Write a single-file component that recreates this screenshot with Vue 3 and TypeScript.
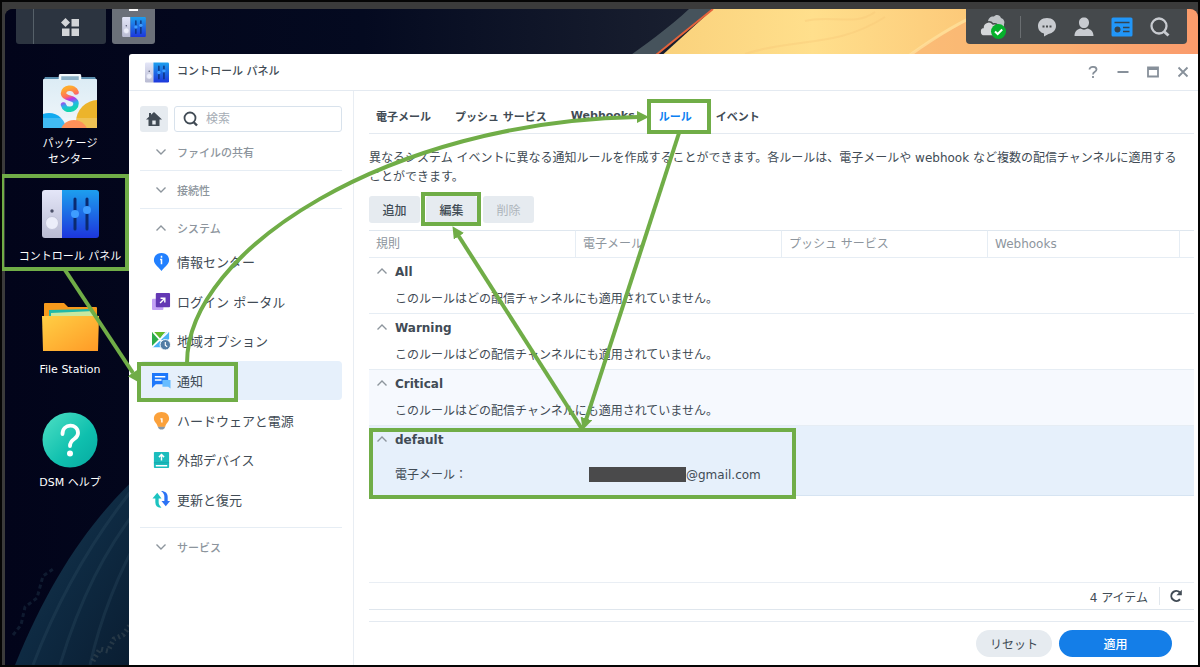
<script setup lang="ts">
import { ref } from 'vue'

interface NavItem { id: string; label: string }
interface Rule { name: string; email?: string; state?: 'hover' | 'selected' }

const tabs: string[] = ['電子メール', 'プッシュ サービス', 'Webhooks', 'ルール', 'イベント']
const activeTab = ref<string>('ルール')

const items: NavItem[] = [
  { id: 'info', label: '情報センター' },
  { id: 'portal', label: 'ログイン ポータル' },
  { id: 'region', label: '地域オプション' },
  { id: 'notify', label: '通知' },
  { id: 'power', label: 'ハードウェアと電源' },
  { id: 'device', label: '外部デバイス' },
  { id: 'update', label: '更新と復元' },
]
const activeItem = ref<string>('notify')
const keyword = ref<string>('')

const columns: string[] = ['規則', '電子メール', 'プッシュ サービス', 'Webhooks', '']
const rules: Rule[] = [
  { name: 'All' },
  { name: 'Warning' },
  { name: 'Critical', state: 'hover' },
  { name: 'default', email: '@gmail.com', state: 'selected' },
]
</script>

<template>
  <div class="shell">
    <div class="desktop">
      <svg class="wallpaper" viewBox="0 0 1193 656" preserveAspectRatio="xMinYMin slice" aria-hidden="true">
        <defs>
          <linearGradient id="sand" x1="0" x2="1" y1="0" y2="0">
            <stop offset="0" stop-color="#f9d07a" />
            <stop offset=".3" stop-color="#ffdf8c" />
            <stop offset=".6" stop-color="#fcc878" />
            <stop offset="1" stop-color="#fb946c" />
          </linearGradient>
          <linearGradient id="night" x1="0" x2="1" y1="0" y2="0">
            <stop offset="0" stop-color="#02041a" />
            <stop offset=".3" stop-color="#040a20" />
            <stop offset=".58" stop-color="#1a2030" />
          </linearGradient>
          <linearGradient id="ridge" x1="0" x2="1" y1="0" y2="1">
            <stop offset="0" stop-color="#1d3a50" />
            <stop offset=".5" stop-color="#0e2a42" />
            <stop offset="1" stop-color="#0a1c30" />
          </linearGradient>
        </defs>
        <rect width="1193" height="656" fill="url(#night)" />
        <path d="M708 0 640 56H612C640 36 665 18 684 0Z" fill="#46535c" />
        <path d="M708 0H1193V60H642Z" fill="url(#sand)" />
        <path d="M708 0 646 50" stroke="#e5623a" stroke-width="2" />
        <path d="M905 45C935 25 960 14 985 0H1193V60H890Z" fill="#f9a56c" opacity=".45" />
        <path d="M905 46C930 28 955 12 985 0" stroke="#ffe2a0" stroke-width="3" fill="none" opacity=".7" />
        <path d="M740 45C790 28 830 40 880 8M800 12C825 5 850 18 870 3" stroke="#f5c676" stroke-width="2" fill="none" opacity=".35" />
        <path d="M140 460C85 510 45 570 10 656H140Z" fill="url(#ridge)" />
        <path d="M136 470C90 525 55 585 28 656M136 495C100 540 75 590 55 656M136 525C115 560 95 610 85 656" stroke="#38576a" stroke-width="3" fill="none" opacity=".25" />
        <path d="M88 652l7-12 8 2 6-12 9-4 8-11" stroke="#566064" stroke-width="5" stroke-dasharray="2 3" fill="none" opacity=".35" />
        <path d="M8 626l8-10 4-18 12-9 6-22 10-7" stroke="#28445a" stroke-width="3" stroke-dasharray="4 3" fill="none" opacity=".35" />
      </svg>

      <svg class="defs" aria-hidden="true">
        <defs>
          <linearGradient id="cpBlue" x1="0" x2="0" y1="0" y2="1">
            <stop offset="0" stop-color="#1d9fee" /><stop offset="1" stop-color="#1d36dc" />
          </linearGradient>
          <linearGradient id="cpGrey" x1="0" x2="0" y1="0" y2="1">
            <stop offset="0" stop-color="#e4e6f8" /><stop offset="1" stop-color="#b9bbd2" />
          </linearGradient>
          <symbol id="panelIcon" viewBox="0 0 57 48">
            <path d="M3 0H20V48H3Q0 48 0 45V3Q0 0 3 0Z" fill="url(#cpGrey)" />
            <path d="M20 0H54Q57 0 57 3V45Q57 48 54 48H20Z" fill="url(#cpBlue)" />
            <circle cx="10" cy="21" r="1.7" fill="#4b5068" />
            <circle cx="10" cy="33" r="6.5" fill="#eceefa" stroke="#c3c5da" />
            <path d="M33 9V39M45 9V39" stroke="#0a2a70" stroke-width="3" stroke-linecap="round" />
            <circle cx="33" cy="24" r="4" fill="#3f9dff" /><circle cx="45" cy="20" r="4" fill="#3f9dff" />
          </symbol>
        </defs>
      </svg>

      <header class="taskbar">
        <div class="launcher">
          <button class="main-menu" type="button" aria-label="メイン メニュー">
            <svg width="18" height="18" viewBox="0 0 18 18" fill="#d3d5d8">
              <path d="M4.500 0 9 4.500 4.500 9 0 4.500Z" /><path d="M10.500 1H18V8.500H10.500ZM1 10.500H8.500V18H1ZM10.500 10.500H18V18H10.500Z" />
            </svg>
          </button>
        </div>
        <button class="task" type="button" aria-label="コントロール パネル">
          <svg width="24" height="20"><use href="#panelIcon" /></svg>
        </button>
        <div class="tray">
          <button type="button" class="tray-cloud" aria-label="同期">
            <svg width="28" height="26" viewBox="0 0 28 26">
              <path d="M9 8C9 4 12 2 15 2.500 16 .5 21 0 22 4 25 5 26 8 25 10V18H12Z" fill="#bfc3c7" />
              <path d="M5 22C0 22 0 14 4 13.500 4 8 11 6 14 10 18 9 20 12 20 15V22Z" fill="#d5d7da" stroke="#474a4c" stroke-width="1.500" />
              <circle cx="19.500" cy="17.500" r="7.500" fill="#06b02c" />
              <path d="M16 17.500 18.700 20 23.200 15.500" stroke="#fff" stroke-width="2" fill="none" />
            </svg>
          </button>
          <button type="button" class="tray-chat" aria-label="チャット">
            <svg width="20" height="20" viewBox="0 0 20 20">
              <path d="M10 1C15.500 1 19 4.500 19 9 19 13 16 16 11.500 17L7 19.500V16.500C3 15.500 1 12.500 1 9 1 4.500 4.500 1 10 1Z" fill="#c8cbd0" />
              <path d="M5.500 9.500h2M9 9.500h2M12.500 9.500h2" stroke="#474a4c" stroke-width="2" />
            </svg>
          </button>
          <button type="button" aria-label="ユーザー">
            <svg width="20" height="20" viewBox="0 0 20 20" fill="#c8cbd0"><path d="M10 0.500C13 .5 15 2.500 15 5.500 15 9 13 11 10 11S5 9 5 5.500C5 2.500 7 .5 10 .5ZM.5 19C.5 14 4 12 6.500 11.500 8.500 13 11.500 13 13.500 11.500 16 12 19.500 14 19.500 19Z" /></svg>
          </button>
          <button type="button" aria-label="ウィジェット">
            <svg width="22" height="20" viewBox="0 0 22 20">
              <rect x=".5" y=".5" width="21" height="19" rx="1.500" fill="#2196f8" />
              <path d="M3.500 5.500H18.500M12 10.500H18.500M12 14.500H18.500" stroke="#35444f" stroke-width="1.700" /><circle cx="6.500" cy="12.500" r="3" fill="#35444f" />
            </svg>
          </button>
          <button type="button" aria-label="検索">
            <svg width="20" height="20" viewBox="0 0 20 20" fill="none" stroke="#c8cbd0"><circle cx="9" cy="9" r="7.500" stroke-width="2.300" /><path d="M14 14.500 18.500 18.500" stroke-width="3" /></svg>
          </button>
        </div>
      </header>

      <div class="workspace">
        <nav class="icons" aria-label="デスクトップ">
          <button class="icon" type="button">
            <span class="picture">
              <svg width="54" height="54" viewBox="0 0 54 54">
                <defs>
                  <linearGradient id="bag" x1="0" x2="0" y1="0" y2="1"><stop offset="0" stop-color="#dcecf5" /><stop offset="1" stop-color="#f0f6fa" /></linearGradient>
                  <linearGradient id="esse" x1=".3" x2=".5" y1="0" y2="1"><stop offset="0" stop-color="#ffab2e" /><stop offset=".38" stop-color="#ff6d5e" /><stop offset=".55" stop-color="#b935ee" /><stop offset=".78" stop-color="#24b6e8" /><stop offset="1" stop-color="#14d4b0" /></linearGradient>
                  <clipPath id="bagClip"><rect y="5" width="54" height="49" rx="1" /></clipPath>
                </defs>
                <path d="M2 3H52L54 7H0Z" fill="#5c8fae" />
                <rect y="5" width="54" height="49" rx="1" fill="url(#bag)" />
                <path d="M17 6V2Q17 1 18 1H36Q37 1 37 2V6" fill="#8bb0c6" stroke="#f3f8fb" stroke-width="2.500" />
                <g clip-path="url(#bagClip)">
                  <circle cx="55" cy="48" r="22" fill="#ecb42b" /><circle cx="6" cy="56" r="17" fill="#12aaf0" /><circle cx="31" cy="60" r="14" fill="#ff7630" />
                  <rect y="44" width="54" height="10" fill="#fff" opacity=".2" />
                </g>
                <path d="M33 18C31 12 20.500 13.500 20.500 19.500 21 25.500 33 23 33 29.500 33 36.500 22 37.500 20.500 31" fill="none" stroke="url(#esse)" stroke-width="5.500" stroke-linecap="round" />
              </svg>
            </span>
            <span>パッケージ<br />センター</span>
          </button>
          <button class="icon" type="button">
            <span class="picture"><svg width="57" height="48"><use href="#panelIcon" /></svg></span>
            <span>コントロール パネル</span>
          </button>
          <button class="icon" type="button">
            <span class="picture">
              <svg width="57" height="50" viewBox="0 0 57 50">
                <defs><linearGradient id="folder" x1="0" x2="1" y1="0" y2="1"><stop offset="0" stop-color="#ffcf45" /><stop offset="1" stop-color="#ff9a26" /></linearGradient></defs>
                <path d="M3 1H22L26 5H54Q55 5 55 6V20H2V2Q2 1 3 1Z" fill="#f79a1c" />
                <path d="M7 8 48 7V16H7Z" fill="#1fb9a8" /><path d="M9 11 52 9V18H9Z" fill="#c8e8a0" />
                <path d="M0 14H57L56 49H1Z" fill="url(#folder)" />
              </svg>
            </span>
            <span>File Station</span>
          </button>
          <button class="icon" type="button">
            <span class="picture">
              <svg width="56" height="56" viewBox="0 0 56 56">
                <defs><linearGradient id="mint" x1="0" x2="1" y1="0" y2="1"><stop offset="0" stop-color="#4fe0c4" /><stop offset=".6" stop-color="#0fbfae" /><stop offset="1" stop-color="#06aaa0" /></linearGradient></defs>
                <circle cx="28" cy="28" r="27.500" fill="url(#mint)" />
                <path d="M20.500 22C20.500 11 36 11 36 21 36 28 28 26 28 34" fill="none" stroke="#fff" stroke-width="3.800" stroke-linecap="round" /><circle cx="28" cy="41.500" r="3" fill="#fff" />
              </svg>
            </span>
            <span>DSM ヘルプ</span>
          </button>
        </nav>

        <section class="window" aria-label="コントロール パネル">
          <header class="titlebar">
            <svg width="24" height="21"><use href="#panelIcon" /></svg>
            <h1>コントロール パネル</h1>
            <div class="controls">
              <button type="button" aria-label="ヘルプ"><svg viewBox="0 0 12 12"><path d="M2.500 3.500C2.500 0 9.500 0 9.500 3.500 9.500 6 6 5.500 6 8.500M6 10V12" /></svg></button>
              <button type="button" aria-label="最小化"><svg viewBox="0 0 12 12"><path d="M0.500 6H11.500" /></svg></button>
              <button type="button" aria-label="最大化"><svg viewBox="0 0 12 12"><path d="M1 1.500H11V10.500H1ZM1 3H11" /></svg></button>
              <button type="button" aria-label="閉じる"><svg viewBox="0 0 12 12"><path d="M1.500 1.500 10.500 10.500M10.500 1.500 1.500 10.500" /></svg></button>
            </div>
          </header>

          <div class="body">
            <aside class="sidebar">
              <div class="finder">
                <button class="home" type="button" aria-label="ホーム">
                  <svg width="16" height="14" viewBox="0 0 16 14" fill="#414b55"><path d="M8 0 16 7.500H13.500V14H2.500V7.500H0L3 4.700V1H5V2.800ZM6.300 8.500V12.500H9.700V8.500Z" fill-rule="evenodd" /></svg>
                </button>
                <label class="search">
                  <svg width="16" height="16" viewBox="0 0 16 16" fill="none" stroke="#414b55"><circle cx="7" cy="7" r="5.500" stroke-width="1.800" /><path d="M10.500 11 14 14.500" stroke-width="2.400" /></svg>
                  <input v-model="keyword" type="text" placeholder="検索" aria-label="検索" />
                </label>
              </div>
              <button class="section" type="button"><svg class="chevron" viewBox="0 0 10 6"><path d="M.5.500 5 5 9.500.500" /></svg>ファイルの共有</button>
              <button class="section" type="button"><svg class="chevron" viewBox="0 0 10 6"><path d="M.5.500 5 5 9.500.500" /></svg>接続性</button>
              <button class="section open" type="button"><svg class="chevron" viewBox="0 0 10 6"><path d="M.5 5.500 5 1 9.500 5.500" /></svg>システム</button>
              <div class="items">
                <button v-for="item in items" :key="item.id" type="button" class="item" :class="{ active: item.id === activeItem }" @click="activeItem = item.id">
                  <svg viewBox="0 0 20 20" aria-hidden="true">
                    <template v-if="item.id === 'info'">
                      <path d="M10 1C14.500 1 18 4 18 8.500 18 13 14 15 10 20 6 15 2 13 2 8.500 2 4 5.500 1 10 1Z" fill="#2280ff" /><path d="M10 4V6M8.500 8H10V13" stroke="#fff" stroke-width="1.600" fill="none" />
                    </template>
                    <template v-else-if="item.id === 'portal'">
                      <rect y="7" width="12" height="12" rx="1" fill="#c3a2f5" /><rect x="4" y="1" width="15" height="15" rx="1" fill="#6438b4" /><path d="M8.500 11.500 13 7M9 6.500H13.500V11" stroke="#fff" stroke-width="1.500" fill="none" />
                    </template>
                    <template v-else-if="item.id === 'region'">
                      <path d="M0 1H13L9 7 0 16Z" fill="#2cab4b" /><path d="M0 1H14L8 7Z" fill="#63bc2b" /><path d="M15 1H18V8L12 17H0Z" fill="#4ab1f6" /><path d="M0 17 17 1M1 1 12 13" stroke="#fff" stroke-width="1.800" /><circle cx="14" cy="14.500" r="5.500" fill="#527ca4" stroke="#fff" /><path d="M14 11.500V15L16 16.500" stroke="#fff" fill="none" stroke-width="1.200" />
                    </template>
                    <template v-else-if="item.id === 'notify'">
                      <path d="M0 2H17V14H4L0 18Z" fill="#1e78fb" /><path d="M11 9.500H19.500V18.500L17 16.500H11Z" fill="#67bcff" /><path d="M3 6H14M3 9.500H10" stroke="#fff" stroke-width="1.500" />
                    </template>
                    <template v-else-if="item.id === 'power'">
                      <path d="M6.500 16H13.500V18L11.500 19.500H8.500L6.500 18Z" fill="#8796a5" /><path d="M10 1C15 1 18 4 18 8 18 12 14.500 13 14 16.500H6C5.500 13 2 12 2 8 2 4 5 1 10 1Z" fill="#fba13b" /><path d="M8.800 8.300H10.400V12" stroke="#fff" fill="none" stroke-width="1.500" />
                    </template>
                    <template v-else-if="item.id === 'device'">
                      <rect x="2" y="2" width="16" height="17" rx="1" fill="#1bbdbd" /><path d="M2 13.500H18" stroke="#14a5ab" /><path d="M10 11V5M7.300 7.500 10 4.800 12.700 7.500M4 16.500H16" stroke="#fff" stroke-width="1.500" fill="none" />
                    </template>
                    <template v-else>
                      <path d="M5.500 3 10 9H7V13C7 15 8 17 10 18.500 6 19 3.500 17 3.500 13V9H.5Z" fill="#1cc3c0" /><path d="M14.500 17 19 11.500H16.500V7C16.500 3.500 14 1 9.500 1 12 3 13 4.500 13 7V11.500H10Z" fill="#2c73f5" />
                    </template>
                  </svg>
                  {{ item.label }}
                </button>
              </div>
              <button class="section last" type="button"><svg class="chevron" viewBox="0 0 10 6"><path d="M.5.500 5 5 9.500.500" /></svg>サービス</button>
            </aside>

            <main class="main">
              <div class="tabs" role="tablist">
                <button v-for="tab in tabs" :key="tab" role="tab" type="button" class="tab" :class="{ active: tab === activeTab }" :aria-selected="tab === activeTab" @click="activeTab = tab">{{ tab }}</button>
              </div>
              <p class="intro">異なるシステム イベントに異なる通知ルールを作成することができます。各ルールは、電子メールや webhook など複数の配信チャンネルに適用することができます。</p>
              <div class="actions">
                <button type="button">追加</button>
                <button type="button">編集</button>
                <button type="button" disabled>削除</button>
              </div>
              <table class="rules">
                <colgroup><col class="c-rule" /><col class="c-mail" /><col class="c-push" /><col class="c-hook" /><col /></colgroup>
                <thead><tr><th v-for="(column, i) in columns" :key="i" scope="col">{{ column }}</th></tr></thead>
                <tbody v-for="rule in rules" :key="rule.name" :class="rule.state">
                  <tr class="group">
                    <th colspan="5" scope="rowgroup"><svg class="chevron" viewBox="0 0 10 6"><path d="M.5 5.500 5 1 9.500 5.500" /></svg>{{ rule.name }}</th>
                  </tr>
                  <tr v-if="rule.email" class="channel">
                    <td>電子メール：</td>
                    <td colspan="4"><span class="address"><span class="redacted"></span>{{ rule.email }}</span></td>
                  </tr>
                  <tr v-else class="empty"><td colspan="5">このルールはどの配信チャンネルにも適用されていません。</td></tr>
                </tbody>
              </table>
              <div class="status">
                <span>4 アイテム</span>
                <button type="button" aria-label="更新">
                  <svg width="14" height="14" viewBox="0 0 14 14"><path d="M11 10.300A5 5 0 1 1 10.700 3.200" fill="none" stroke="#414b55" stroke-width="2" /><path d="M12.800.800V6.200H7.400Z" fill="#414b55" /></svg>
                </button>
              </div>
              <footer class="footer">
                <button class="reset" type="button">リセット</button>
                <button class="apply" type="button">適用</button>
              </footer>
            </main>
          </div>
        </section>
      </div>
    </div>

    <svg class="callouts" width="1200" height="667" viewBox="0 0 1200 667" aria-hidden="true">
      <defs>
        <marker id="tip" viewBox="0 0 12 12" refX="11" refY="6" markerWidth="12" markerHeight="12" markerUnits="userSpaceOnUse" orient="auto"><path d="M0 0 12 6 0 12Z" fill="#70ad47" /></marker>
      </defs>
      <g fill="none" stroke="#70ad47" stroke-width="4">
        <rect x="2" y="176" width="125" height="93" />
        <rect x="139" y="364" width="97" height="36" />
        <rect x="649" y="101" width="60" height="31" />
        <rect x="423" y="194" width="56" height="30" />
        <rect x="371" y="430" width="423" height="67" />
      </g>
      <g fill="none" stroke="#70ad47" stroke-width="4">
        <path d="M65 270 133 373" /><path d="M187 363C187 250 390 121 638 117" /><path d="M679 133 586 420" /><path d="M582 429 458 235" />
      </g>
      <g stroke="none" fill="none">
        <path d="M65 270 139 382" marker-end="url(#tip)" /><path d="M630 117H648" marker-end="url(#tip)" /><path d="M679 133 583 429" marker-end="url(#tip)" /><path d="M582 429 453 227" marker-end="url(#tip)" />
      </g>
    </svg>
  </div>
</template>

<style>
body { margin: 0; }
</style>

<style scoped>
* { box-sizing: border-box; }
button { font: inherit; color: inherit; border: 0; background: none; padding: 0; margin: 0; cursor: pointer; }
.shell { position: relative; display: flex; min-height: 100vh; padding: 7px 0 0 3px; border: 2px solid #050505; background: #3b3b3b; overflow: hidden; font-family: "DejaVu Sans", "Noto Sans CJK JP", sans-serif; font-size: 12px; color: #414b55; }
.desktop { position: relative; flex: 1; min-width: 0; display: flex; flex-direction: column; border-radius: 8px 8px 0 0; overflow: hidden; background: #02041a; }
.wallpaper { position: absolute; inset: 0; width: 100%; height: 100%; }
.defs { position: absolute; width: 0; height: 0; }
.taskbar { position: relative; display: flex; align-items: flex-start; gap: 6px; height: 45px; padding: 0 11px; }
.launcher { width: 90px; height: 35px; padding-left: 17px; border-radius: 0 0 3px 3px; background: #2c3440; }
.main-menu { width: 100%; height: 35px; border-left: 1px solid #566069; display: grid; place-items: center; }
.task { position: relative; width: 43px; height: 35px; display: grid; place-items: center; border-radius: 0 0 3px 3px; background: #6b7079; }
.task::before { content: ""; position: absolute; top: 0; left: 17px; width: 9px; height: 2px; background: #fff; }
.tray { margin-left: auto; display: flex; align-items: center; height: 35px; padding: 0 17px 0 13px; gap: 17px; border-radius: 0 0 4px 4px; background: #45494c; }
.tray button { display: flex; }
.tray .tray-cloud { margin-right: -4px; }
.tray .tray-chat { padding-left: 16px; height: 22px; align-items: center; border-left: 1px solid #6a6e71; }
.workspace { position: relative; flex: 1; display: flex; min-height: 0; }
.icons { flex: 0 0 124px; padding: 19px 0 0 6px; display: grid; grid-auto-rows: 113px; align-content: start; color: #fff; font-size: 11px; line-height: 16px; text-align: center; text-shadow: 0 1px 2px #000; }
.icon { display: flex; flex-direction: column; align-items: center; gap: 7px; line-height: 16px; white-space: nowrap; }
.picture { display: grid; place-items: center; height: 56px; }
.window { flex: 1; min-width: 0; display: flex; flex-direction: column; background: #fff; border-radius: 3px 0 0 0; }
.titlebar { display: flex; align-items: center; height: 37px; padding: 0 9px 0 16px; gap: 8px; border-bottom: 1px solid #e4eaf1; }
.titlebar h1 { margin: 0; font-size: 11px; font-weight: 500; line-height: 18px; }
.controls { margin-left: auto; display: flex; gap: 18px; }
.controls button { display: flex; }
.controls svg { width: 12px; height: 12px; fill: none; stroke: #87909a; stroke-width: 1.8; }
.body { flex: 1; display: flex; min-height: 0; }
.sidebar { flex: 0 0 225px; min-width: 0; padding: 15px 11px 0; border-right: 1px solid #e8edf3; }
.finder { display: flex; gap: 6px; margin-bottom: 1px; }
.home { width: 28px; height: 26px; border-radius: 3px; background: #e6ebf0; display: grid; place-items: center; }
.search { flex: 1; min-width: 0; display: flex; align-items: center; gap: 7px; height: 26px; padding: 0 8px; border: 1px solid #d8e2ec; border-radius: 3px; }
.search input { flex: 1; min-width: 0; width: 0; padding: 0; border: 0; outline: 0; background: none; font: inherit; color: inherit; }
.search input::placeholder { color: #a6adb5; opacity: 1; }
.section { display: flex; align-items: center; width: 100%; height: 38px; padding: 0 16px; gap: 11px; border-bottom: 1px solid #e6edf4; font-size: 11px; font-weight: 500; color: #8d959d; text-align: left; }
.section.open { height: 33px; padding-top: 4px; border-bottom: 0; }
.section.last { height: 38px; margin-top: 8px; border-top: 1px solid #e6edf4; border-bottom: 0; }
.chevron { flex: none; width: 10px; height: 6px; fill: none; stroke: #8d959d; stroke-width: 1.4; overflow: visible; }
.items { display: grid; grid-auto-rows: 1fr; height: 277px; }
.item { display: flex; align-items: center; gap: 6px; padding: 0 12px; border-radius: 4px; font-size: 13px; text-align: left; white-space: nowrap; }
.item svg { flex: none; width: 19px; height: 19px; }
.item.active { background: #e6f0fb; }
.main { flex: 1; min-width: 0; display: flex; flex-direction: column; padding: 0 4px 0 15px; }
.tabs { display: flex; gap: 24px; height: 43px; padding: 7px 7px 0; border-bottom: 1px solid #e4eaf1; font-size: 11px; font-weight: 700; }
.tab { white-space: nowrap; }
.tab.active { color: #0c7ff2; }
.intro { margin: 15px 0 9px; padding-right: 8px; line-height: 19px; }
.actions { display: flex; gap: 6px; margin-bottom: 7px; }
.actions button { width: 51px; height: 27px; border-radius: 3px; background: #e6ebf0; font-weight: 500; }
.actions button:disabled { color: #adb4bb; font-weight: 400; cursor: default; }
.rules { width: 100%; table-layout: fixed; border-collapse: separate; border-spacing: 0; }
.c-rule { width: 207px; }
.c-mail, .c-push { width: 206px; }
.c-hook { width: 192px; }
.rules th, .rules td { padding: 0; text-align: left; font-weight: 400; line-height: 18px; }
.rules thead th { height: 28px; padding-left: 7px; border-top: 1px solid #dfe7ef; border-bottom: 1px solid #e6edf4; border-right: 1px solid #e6edf4; color: #8d959d; }
.rules thead th:last-child { border-right: 0; }
.rules .group th { height: 28px; padding-left: 8px; font-weight: 700; }
.group .chevron { margin-right: 8px; vertical-align: 2px; }
.rules .empty td { height: 28px; padding: 0 0 2px 26px; border-bottom: 1px solid #e6edf4; }
.rules .channel td { height: 42px; padding-left: 26px; border-bottom: 1px solid #d6e4f2; }
.rules .channel td + td { padding-left: 13px; }
.hover { background: #f6f9fe; }
.selected { background: #e6f0fb; }
.address { display: flex; align-items: center; }
.redacted { width: 97px; height: 15px; background: #4a4a4b; }
.status { margin-top: auto; display: flex; align-items: center; justify-content: flex-end; gap: 11px; height: 28px; border-top: 1px solid #e9eef4; border-bottom: 1px solid #dfe6ed; }
.status button { display: flex; align-items: center; height: 18px; padding: 0 11px 0 9px; border-left: 1px solid #e1e7ed; }
.footer { display: flex; justify-content: flex-end; gap: 7px; margin-top: 11px; padding: 8px 22px 8px 0; border-top: 1px solid #e4eaf1; }
.footer button { height: 27px; border-radius: 14px; }
.reset { width: 76px; background: #e6ebf0; }
.footer .apply { width: 113px; background: #147ee8; color: #fff; font-weight: 500; }
.callouts { position: absolute; top: -2px; left: -2px; pointer-events: none; }
</style>
